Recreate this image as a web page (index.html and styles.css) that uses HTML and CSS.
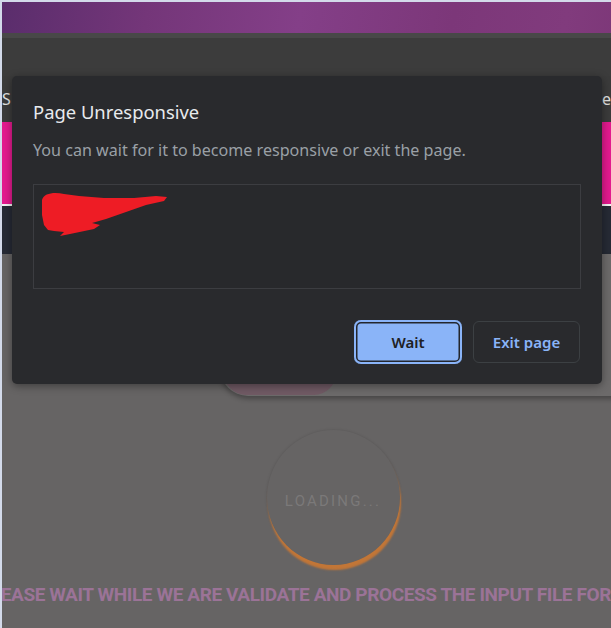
FILE: index.html
```html
<!DOCTYPE html>
<html lang="en">
<head>
<meta charset="utf-8">
<title>Page Unresponsive</title>
<link rel="stylesheet" href="styles.css">
</head>
<body>
<div class="page">
  <div class="banner"></div>
  <div class="strip"></div>
  <div class="toolbar"></div>
  <div class="tabs"><span class="tab-left">S</span><span class="tab-right">le</span></div>
  <div class="hero"></div>
  <div class="hero-line"></div>
  <div class="navy"></div>
  <div class="card"><div class="pill"></div></div>
  <div class="loader"><span class="loader-text">LOADING...</span></div>
  <div class="notice"><span class="notice-text">PLEASE WAIT WHILE WE ARE VALIDATE AND PROCESS THE INPUT FILE FOR</span></div>
</div>

<div class="dialog">
  <h1 class="dialog-title">Page Unresponsive</h1>
  <p class="dialog-text">You can wait for it to become responsive or exit the page.</p>
  <div class="dialog-box">
    <svg class="scribble" width="140" height="60" viewBox="0 0 140 60">
      <path d="M8 15 C10 8 20 7 30 9 L45 11 L70 13 L100 13 L122 11 L133 12 L130 16 L112 20 L92 27 L72 34 L58 38 L66 40 L60 44 L36 49 L26 51 L30 47 L20 46 L14 45 L10 40 L8 30 Z" fill="#ee1c25"/>
    </svg>
  </div>
  <div class="dialog-actions">
    <button class="btn btn-wait">Wait</button>
    <button class="btn btn-exit">Exit page</button>
  </div>
</div>
</body>
</html>
```

FILE: styles.css
```css
html, body {
  margin: 0;
  padding: 0;
}
body {
  width: 611px;
  height: 628px;
  box-sizing: border-box;
  padding: 2px 0 0 2px;
  background: #d3daea;
  overflow: hidden;
  position: relative;
  font-family: "Noto Sans", "Open Sans", sans-serif;
}
.page {
  width: 662px;
  height: 626px;
  background: #666464;
  overflow: hidden;
  display: flex;
  flex-direction: column;
}
.banner {
  height: 31px;
  flex: none;
  background: linear-gradient(100deg, #5a2d6c 0%, #743679 22%, #843f88 45%, #7c3779 68%, #813b7d 85%, #7a3575 100%);
}
.strip {
  height: 5px;
  flex: none;
  background: #484848;
}
.toolbar {
  height: 38px;
  flex: none;
  background: #3c3c3c;
}
.tabs {
  height: 46px;
  flex: none;
  background: #3b3b3b;
  display: flex;
  align-items: center;
  justify-content: space-between;
  width: 609px;
  color: #e2e2e2;
  font-size: 16px;
  font-family: "Noto Sans", sans-serif;
}
.hero {
  height: 82px;
  flex: none;
  background: #e31a8e;
}
.hero-line {
  height: 2px;
  flex: none;
  background: #f2f2f2;
}
.navy {
  height: 48px;
  flex: none;
  background: #262a35;
}
.card {
  flex: none;
  margin-left: 218px;
  width: 470px;
  height: 142px;
  box-sizing: border-box;
  padding: 0 0 1px 4px;
  background: #6c6a6a;
  border-radius: 0 0 28px 28px;
  box-shadow: 0 3px 5px rgba(0, 0, 0, 0.3);
  display: flex;
  align-items: flex-end;
}
.pill {
  width: 112px;
  height: 50px;
  border-radius: 22px;
  background: #705a64;
}
.loader {
  flex: none;
  align-self: center;
  margin-top: 34px;
  width: 133px;
  height: 135px;
  border-radius: 50%;
  box-shadow: 1px 5px 2px #c27637, 0 0 3px rgba(0, 0, 0, 0.15);
  display: flex;
  align-items: center;
  justify-content: center;
}
.loader-text {
  font-family: Roboto, sans-serif;
  font-size: 15px;
  letter-spacing: 2.2px;
  color: #7b7979;
  margin-top: 6px;
}
.notice {
  margin-top: 19px;
  white-space: nowrap;
  font-family: Roboto, sans-serif;
  font-weight: 700;
  font-size: 19px;
  letter-spacing: -0.4px;
  color: #9b7397;
  line-height: 22px;
}
.notice-text {
  display: inline-block;
  margin-left: -23px;
}

/* dialog */
.dialog {
  position: absolute;
  left: 12px;
  top: 76px;
  width: 590px;
  height: 308px;
  box-sizing: border-box;
  padding: 24px 21px 20px 21px;
  background: #292a2d;
  border-radius: 5px;
  box-shadow: 0 2px 8px rgba(0, 0, 0, 0.4);
  display: flex;
  flex-direction: column;
}
.dialog-title {
  margin: 0;
  font-size: 18.4px;
  font-weight: 400;
  line-height: 24px;
  color: #e8eaed;
}
.dialog-text {
  margin: 16px 0 0;
  font-size: 16.1px;
  line-height: 20px;
  color: #9aa0a6;
}
.dialog-box {
  margin-top: 24px;
  height: 105px;
  box-sizing: border-box;
  border: 1px solid #3c3d41;
  background: #28292c;
}
.scribble {
  display: block;
}
.dialog-actions {
  margin-top: 31px;
  display: flex;
  justify-content: flex-end;
  align-items: center;
  gap: 11px;
}
.btn {
  font-family: "Noto Sans", sans-serif;
  font-size: 15px;
  font-weight: 600;
  cursor: pointer;
}
.btn-wait {
  width: 108px;
  height: 44px;
  border: none;
  border-radius: 7px;
  background: #8ab4f8;
  color: #202124;
  box-shadow: inset 0 0 0 2px #8ab4f8, inset 0 0 0 3.5px #23262d;
}
.btn-exit {
  width: 107px;
  height: 42px;
  border: 1px solid #3c4043;
  border-radius: 6px;
  background: transparent;
  color: #8ab4f8;
  margin-right: 1px;
}
```
